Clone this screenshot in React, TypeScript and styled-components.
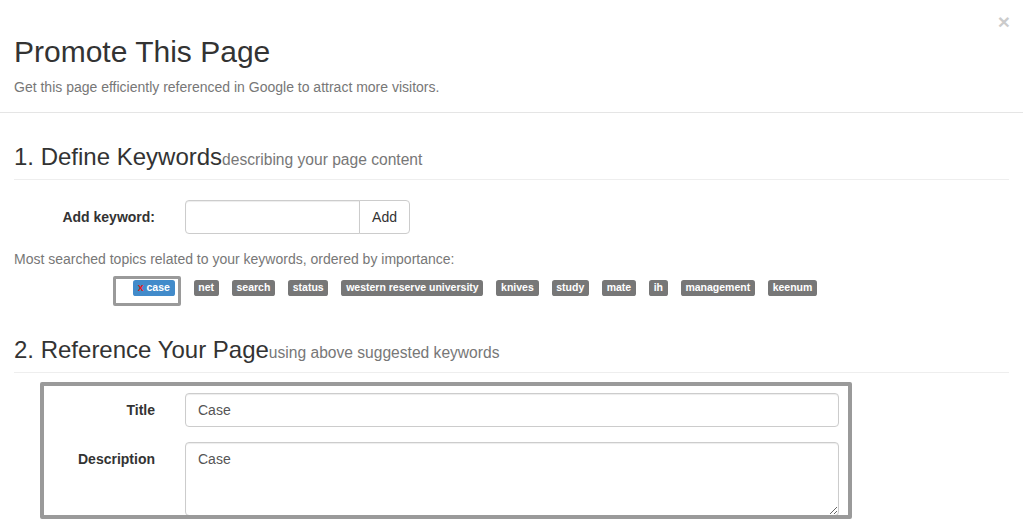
import React from "react";
import styled, { createGlobalStyle } from "styled-components";

const Global = createGlobalStyle`
  html, body { margin: 0; padding: 0; background: #fff; }
  body {
    font-family: "Liberation Sans", Arial, Helvetica, sans-serif;
    font-size: 14px;
    line-height: 20px;
    color: #333;
  }
  * { box-sizing: border-box; }
`;

const Page = styled.div`
  width: 1023px;
  min-height: 525px;
  overflow: hidden;
`;

const Header = styled.header`
  display: flex;
  justify-content: space-between;
  align-items: flex-start;
  padding: 15px 13px 15px 14px;
  border-bottom: 1px solid #e5e5e5;
`;

const TitleBlock = styled.div`
  display: flex;
  flex-direction: column;
`;

const Title = styled.h1`
  margin: 20px 0 0;
  font-size: 30px;
  line-height: 33px;
  font-weight: 400;
  color: #333;
`;

const Subtitle = styled.p`
  margin: 9px 0 0;
  font-size: 14px;
  line-height: 20px;
  color: #777;
`;

const Close = styled.button`
  margin-top: -4px;
  padding: 0;
  border: 0;
  background: transparent;
  font-family: "Liberation Sans", Arial, sans-serif;
  font-size: 21px;
  font-weight: 700;
  line-height: 1;
  color: #000;
  opacity: 0.2;
  cursor: pointer;
`;

const Body = styled.main`
  padding: 0 14px;
`;

const SectionHeading = styled.h3<{ $top: number }>`
  margin: ${(p) => p.$top}px 0 20px;
  padding-bottom: 9px;
  border-bottom: 1px solid #eee;
  font-size: 24px;
  line-height: 26px;
  height: 36px;
  font-weight: 400;
  color: #333;
`;

const Small = styled.small`
  font-size: 15.6px;
  line-height: 1;
  color: #777;
  font-weight: 400;
`;

const FormRow = styled.div`
  display: grid;
  grid-template-columns: 141px 1fr;
  column-gap: 30px;
  margin-bottom: 15px;
`;

const Label = styled.label`
  text-align: right;
  font-weight: 700;
  padding-top: 7px;
  line-height: 20px;
  color: #333;
`;

const InputGroup = styled.div`
  display: flex;
  width: 225px;
`;

const TextInput = styled.input<{ $attached?: boolean }>`
  flex: 1;
  min-width: 0;
  height: 34px;
  padding: 6px 12px;
  font-family: inherit;
  font-size: 14px;
  color: #555;
  background: #fff;
  border: 1px solid #ccc;
  border-radius: ${(p) => (p.$attached ? "4px 0 0 4px" : "4px")};
  box-shadow: inset 0 1px 1px rgba(0, 0, 0, 0.075);
  outline: none;
`;

const WideField = styled.div`
  width: 654px;
  display: flex;
`;

const TextArea = styled.textarea`
  width: 100%;
  height: 74px;
  padding: 6px 12px;
  font-family: inherit;
  font-size: 14px;
  line-height: 20px;
  color: #555;
  background: #fff;
  border: 1px solid #ccc;
  border-radius: 4px;
  box-shadow: inset 0 1px 1px rgba(0, 0, 0, 0.075);
  outline: none;
  display: block;
`;

const AddButton = styled.button`
  height: 34px;
  padding: 6px 12px;
  margin-left: -1px;
  font-family: inherit;
  font-size: 14px;
  color: #333;
  background: #fff;
  border: 1px solid #ccc;
  border-radius: 0 4px 4px 0;
  cursor: pointer;
`;

const Hint = styled.p`
  margin: 0;
  line-height: 20px;
  color: #777;
`;

const Tag = styled.span<{ $primary?: boolean }>`
  display: inline-block;
  padding: 0.2em 0.45em 0.3em;
  font-size: 10.5px;
  font-weight: 700;
  line-height: 1;
  color: #fff;
  white-space: pre;
  border-radius: 0.25em;
  background: ${(p) => (p.$primary ? "#428bca" : "#777")};
`;

const TagRow = styled.div`
  display: flex;
  align-items: flex-start;
  gap: 13px;
  margin: 7px 0 0 99px;

  & > ${Tag} {
    margin-top: 4px;
  }
`;

const Selected = styled.div`
  display: flex;
  align-items: flex-start;
  height: 30px;
  padding: 1px 3px 0 17px;
  border: 3px solid #9a9a9a;
  border-radius: 2px;
`;

const Remove = styled.span`
  color: #e0201b;
`;

const FormArea = styled.div`
  position: relative;
`;

const Highlight = styled.div`
  position: absolute;
  top: -11px;
  left: 26px;
  width: 812px;
  height: 137px;
  border: 4px solid #9a9a9a;
  border-radius: 2px;
  pointer-events: none;
`;

const suggestions = [
  "net",
  "search",
  "status",
  "western reserve university",
  "knives",
  "study",
  "mate",
  "ih",
  "management",
  "keenum",
];

export default function App() {
  return (
    <Page>
      <Global />
      <Header>
        <TitleBlock>
          <Title>Promote This Page</Title>
          <Subtitle>Get this page efficiently referenced in Google to attract more visitors.</Subtitle>
        </TitleBlock>
        <Close aria-label="Close">×</Close>
      </Header>
      <Body>
        <SectionHeading $top={31}>
          1. Define Keywords<Small>describing your page content</Small>
        </SectionHeading>
        <FormRow>
          <Label>Add keyword:</Label>
          <InputGroup>
            <TextInput $attached type="text" />
            <AddButton>Add</AddButton>
          </InputGroup>
        </FormRow>
        <Hint>Most searched topics related to your keywords, ordered by importance:</Hint>
        <TagRow>
          <Selected>
            <Tag $primary>
              <Remove>x</Remove> case
            </Tag>
          </Selected>
          {suggestions.map((s) => (
            <Tag key={s}>{s}</Tag>
          ))}
        </TagRow>
        <SectionHeading $top={31}>
          2. Reference Your Page<Small>using above suggested keywords</Small>
        </SectionHeading>
        <FormArea>
          <FormRow>
            <Label>Title</Label>
            <WideField>
              <TextInput type="text" defaultValue="Case" />
            </WideField>
          </FormRow>
          <FormRow>
            <Label>Description</Label>
            <WideField>
              <TextArea defaultValue="Case" />
            </WideField>
          </FormRow>
          <Highlight />
        </FormArea>
      </Body>
    </Page>
  );
}
